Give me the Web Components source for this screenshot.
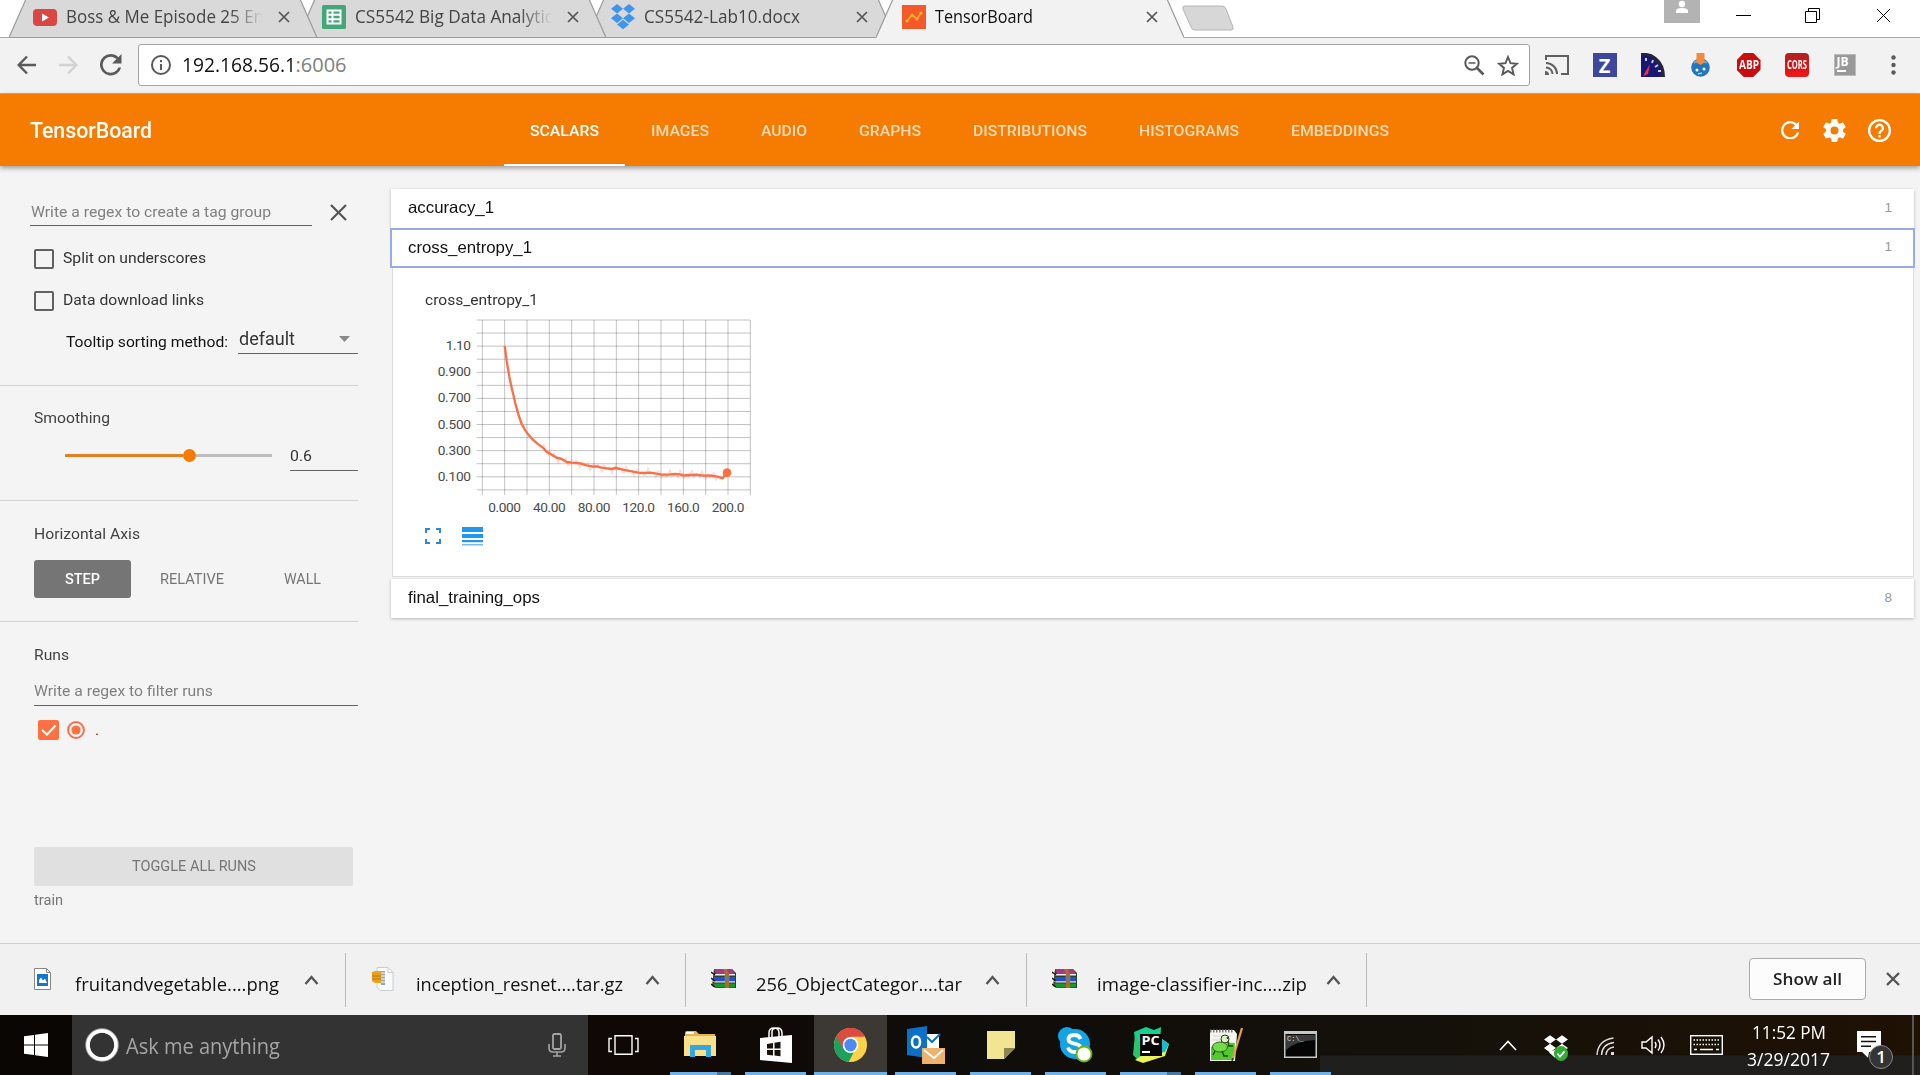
<!DOCTYPE html>
<html lang="en">
<head>
<meta charset="utf-8">
<title>TensorBoard</title>
<style>
html,body{margin:0;padding:0}
body{width:1920px;height:1075px;overflow:hidden;background:#f4f4f4;font-family:Roboto,"Liberation Sans",sans-serif}
</style>
</head>
<body>
<app-desktop></app-desktop>
<script>
const define = (name, css, html, ready) => customElements.define(name, class extends HTMLElement {
  connectedCallback() {
    if (this.shadowRoot) return;
    const root = this.attachShadow({ mode: 'open' });
    root.innerHTML = `<style>:host{display:block;box-sizing:border-box}*{box-sizing:border-box}svg{display:block;flex:none}${css}</style>${typeof html === 'function' ? html(this) : html}`;
    if (ready) ready(this, root);
  }
});
const svg = (w, h, body, vb, attrs = '') => `<svg width="${w}" height="${h}" viewBox="${vb || `0 0 ${w} ${h}`}" preserveAspectRatio="none" ${attrs}>${body}</svg>`;
const cross = (n, col, sw) => svg(n, n, `<path d="M1 1L${n - 1} ${n - 1}M${n - 1} 1L1 ${n - 1}" stroke="${col}" stroke-width="${sw}" fill="none"/>`);

/* One line of text stretched to the width given in w */
define('fit-text', `:host{flex:none;white-space:nowrap;line-height:1.2}span{display:inline-block;transform-origin:0 50%}`,
  '<span><slot></slot></span>', (el, root) => {
    const s = root.querySelector('span');
    if (el.getAttribute('s')) el.style.fontSize = el.getAttribute('s') + 'px';
    const w = +el.getAttribute('w');
    const natural = s.getBoundingClientRect().width;
    el.style.width = w + 'px';
    if (natural) s.style.transform = `scaleX(${w / natural})`;
  });

/* ---------- browser chrome ---------- */
define('browser-tab', `
:host{width:308px;height:38px;margin-right:-19px;flex:none;display:grid}
.shape,.row{grid-area:1/1}
.row{display:flex;align-items:center;height:34px;padding-left:24px}
.ico{width:24px;display:flex;justify-content:center;margin-right:9px;flex:none}
.label{width:206px;overflow:hidden;color:#444;flex:none;margin-top:-1px}
:host([fade]) .label{-webkit-mask-image:linear-gradient(90deg,#000 165px,transparent 197px);mask-image:linear-gradient(90deg,#000 165px,transparent 197px)}
:host([active]) .label{color:#111}
:host([active]) .row{padding-left:26px}
:host([active]) .x{margin-left:5px}
.x{margin-left:6px}`,
  el => {
    const on = el.hasAttribute('active');
    return `<div class="shape">${svg(308, 38, `<path d="M0 37.5L17 -1H291L308 37.5V38H0z" fill="${on ? '#f2f2f2' : '#d9d9d9'}"/><path d="M0 37.5L17 -1M291 -1L308 37.5${on ? '' : 'M0 37.5H308'}" stroke="#9b9b9b" stroke-width="1.2" fill="none"/>`)}</div>
<div class="row"><div class="ico"><slot name="icon"></slot></div><div class="label"><slot></slot></div><div class="x">${cross(12, '#555', 1.7)}</div></div>`;
  });

const dropbox = (w, h, c) => svg(w, h, `<path fill="${c}" d="M6 0L0 4l6 4 6-4zM18 0l-6 4 6 4 6-4zM0 12l6 4 6-4-6-4zM18 8l-6 4 6 4 6-4zM6 17.4l6 4 6-4-6-4z"/>`, '0 0 24 22');
define('tab-strip', `
:host{display:flex;height:38px;background:#fff;border-bottom:1px solid #a8a8a8;padding-left:9px;font:18px "Open Sans",sans-serif}
browser-tab:nth-of-type(1){z-index:3}browser-tab:nth-of-type(2){z-index:2}browser-tab:nth-of-type(3){z-index:1}browser-tab:nth-of-type(4){z-index:4}
.new{margin:5px 0 0 17px}
.win{margin-left:auto;display:flex;align-items:flex-start}
.av{width:36px;height:23px;background:#b3b3b3;display:flex;justify-content:center}
.min{width:15px;height:1px;background:#000;margin:15px 54px 0 36px}
.res{margin-top:8px}.cl{margin:8px 29px 0 56px}`,
  `<browser-tab fade>${svg(24, 17, '<rect width="24" height="17" rx="4" fill="#d94644"/><path d="M9 4.5v8l7-4z" fill="#fff"/>', '', 'slot="icon"')}<fit-text w="198">Boss &amp; Me Episode 25 En</fit-text></browser-tab>
<browser-tab fade>${svg(24, 24, '<rect width="24" height="24" rx="1.5" fill="#43a778"/><path d="M5.5 5.5h13v13h-13zM5.5 9.8h13M5.5 14.2h13M10.5 5.5v13" fill="none" stroke="#fff" stroke-width="2"/>', '', 'slot="icon"')}<fit-text w="198">CS5542 Big Data Analytic</fit-text></browser-tab>
<browser-tab><div slot="icon">${dropbox(24, 26, '#3f95ea')}</div><fit-text w="156">CS5542-Lab10.docx</fit-text></browser-tab>
<browser-tab active>${svg(24, 24, '<rect width="24" height="24" fill="#f4592a"/><path d="M5 16l5-6 5 4 4-6" fill="none" stroke="#ffb02a" stroke-width="1.8"/><g fill="#ffb02a"><circle cx="5" cy="16" r="1.6"/><circle cx="10" cy="10" r="1.5"/><circle cx="15" cy="14" r="1.5"/><circle cx="19" cy="8" r="1.6"/></g>', '', 'slot="icon"')}<fit-text w="98">TensorBoard</fit-text></browser-tab>
<div class="new">${svg(52, 26, '<path d="M3 1h37q3 0 4 3l7 18q1 3-2 3H13q-3 0-4-3L1 4q-1-3 2-3z" fill="#d7d7d7" stroke="#b4b4b4"/>')}</div>
<div class="win"><div class="av">${svg(14, 13, '<circle cx="7" cy="4" r="3.2" fill="#fff"/><path d="M1 13v-2q0-3 6-3t6 3v2z" fill="#fff"/>')}</div><div class="min"></div>
<div class="res">${svg(15, 15, '<path d="M.5 3.5h11v11H.5zM3.500 3.500V.5h11v11h-3" fill="none" stroke="#000"/>')}</div><div class="cl">${cross(15, '#000', 1)}</div></div>`);

const reload = (n, c) => svg(n, n, `<path fill="${c}" d="M17.65 6.35A7.96 7.96 0 0 0 12 4a8 8 0 1 0 7.73 10h-2.08A6 6 0 1 1 12 6c1.66 0 3.14.69 4.22 1.780L13 11h7V4z"/>`, '4 4 16 16');
define('nav-bar', `
:host{display:flex;align-items:center;height:56px;background:#f2f2f2;border-bottom:1px solid #b7b0a8;padding:0 0 1px 17px;font:20px "Open Sans",sans-serif}
.f{margin:0 22px 0 23px}
.omni{margin-left:16px;width:1392px;flex:none;height:42px;border:1px solid #a3a3a3;border-radius:3px;background:#fff;display:flex;align-items:center;padding-left:12px}
.u{margin-left:11px;color:#111}.p{color:#808080}.z{margin-left:auto}.s{margin:0 10px 0 12px}
.ext{display:flex;align-items:center;margin-left:15px;width:370px;flex:none}
.ext>*{width:24px;height:24px;margin-right:24px;display:flex;align-items:center;justify-content:center;flex:none}
.ext>:last-child{margin:0 0 0 1px}
.z1{background:#3d479c;color:#fff;font:bold 20px "Open Sans"}
.cors{background:linear-gradient(#b02224,#d11 60%,#ee1d1d);border-radius:4px;color:#fff}
.abp{background:#c70d0d;color:#fff;clip-path:polygon(30% 0,70% 0,100% 30%,100% 70%,70% 100%,30% 100%,0 70%,0 30%)}
.jb>div{width:22px;height:22px;background:#999;border:1px solid #bbb;color:#fff;font:bold 12px "Open Sans";line-height:14px;padding-left:2px}
.jb i{display:block;width:9px;height:2px;background:#fff;margin-top:1px}`,
  `${svg(19, 20, '<path d="M19 10H2M10 1.500L1.700 10l8.300 8.500" fill="none" stroke="#5a5a5a" stroke-width="2.400"/>')}
<div class="f">${svg(19, 20, '<path d="M0 10h17M9 1.500L17.300 10 9 18.500" fill="none" stroke="#d2d2d2" stroke-width="2.400"/>')}</div>
${reload(21.500, '#5a5a5a')}
<div class="omni">${svg(20, 20, '<circle cx="10" cy="10" r="9" fill="none" stroke="#5a5a5a" stroke-width="2"/><path d="M9 9h2v6H9zM9 5h2v2.300H9z" fill="#5a5a5a"/>')}
<fit-text class="u" w="114">192.168.56.1</fit-text><fit-text class="p" w="51">:6006</fit-text>
<div class="z">${svg(21, 21, '<circle cx="8" cy="8" r="6.700" fill="none" stroke="#5a5a5a" stroke-width="2"/><path d="M13 13l6.500 6.500" stroke="#5a5a5a" stroke-width="2.600"/><path d="M4.500 8h7" stroke="#5a5a5a" stroke-width="1.500"/>')}</div>
<div class="s">${svg(22, 21, '<path d="M11 2l2.500 6.200 6.500.5-5 4.200 1.600 6.500L11 15.900l-5.600 3.500L7 12.900 2 8.700l6.500-.5z" fill="none" stroke="#5a5a5a" stroke-width="1.900"/>')}</div></div>
<div class="ext"><div>${svg(24, 20, '<path d="M1 5V1h22v18h-7M1 8a11 11 0 0 1 11 11M1 12.500A6.500 6.500 0 0 1 7.500 19" fill="none" stroke="#606060" stroke-width="2"/><path d="M0 16a4 4 0 0 1 4 4H0z" fill="#606060"/>')}</div>
<div class="z1">Z</div>
<div>${svg(24, 24, '<path d="M0 0q9-1 15 4 9 7 9 20H0z" fill="#26233d"/><path d="M0 3q8-1 13 4 7 6 7 14l-3 3H0z" fill="#171774"/><path d="M5 5v3M12 7l-1 3M17 12l-3 2M20 18h-3" stroke="#c9cdf5" stroke-width="2"/><path d="M2 23L9 11 7 21z" fill="#f62c5b"/>')}</div>
<div>${svg(19, 24, '<circle cx="9.500" cy="14.500" r="9.300" fill="#2176bd"/><path d="M3 10q5-5 13 0" stroke="#58a9df" stroke-width="2" fill="none"/><path d="M5.500 0h8v8h2.500l-6.500 4-6.500-4h2.500z" fill="#f68a3a"/><circle cx="6" cy="17" r="1.500" fill="#fff"/><circle cx="13" cy="16" r="1.500" fill="#fff"/><path d="M7 21l4-1" stroke="#fff"/>')}</div>
<div class="abp"><fit-text w="20" s="11.500" style="font-weight:bold">ABP</fit-text></div>
<div class="cors"><fit-text w="20" s="12" style="font-weight:bold">CORS</fit-text></div>
<div class="jb"><div>JB<i></i></div></div>
<div>${svg(5, 20, '<g fill="#5a5a5a"><circle cx="2.500" cy="2.500" r="2.200"/><circle cx="2.500" cy="10" r="2.200"/><circle cx="2.500" cy="17.500" r="2.200"/></g>')}</div></div>`);

/* ---------- TensorBoard ---------- */
define('tb-header', `
:host{display:flex;height:72px;align-items:center;background:#f57c00;color:#fff;padding-left:30px;box-shadow:0 2px 5px rgba(0,0,0,.38);z-index:2;font-weight:500}
.tabs{display:flex;margin-left:352px}
.tabs div{height:72px;padding:2px 26px 0;display:flex;align-items:center;color:#fddcb9;font-weight:500}
.tabs .on{color:#fff;border-bottom:2px solid #fff;padding-top:4px;font-weight:500}
.r{margin-left:auto;display:flex;align-items:center;padding-right:29px}
.g{margin:0 22px 0 24px}`,
  `<fit-text w="122" s="21.500" style="margin-top:2px">TensorBoard</fit-text>
<div class="tabs"><div class="on"><fit-text w="69" s="15.500">SCALARS</fit-text></div>${[['IMAGES', 58], ['AUDIO', 46], ['GRAPHS', 62], ['DISTRIBUTIONS', 114], ['HISTOGRAMS', 100], ['EMBEDDINGS', 98]].map(t => `<div><fit-text w="${t[1]}" s="15.500">${t[0]}</fit-text></div>`).join('')}</div>
<div class="r">${reload(18.500, '#fff')}
<div class="g">${svg(23, 23, '<path fill="#fff" d="M19.430 12.980c.04-.32.07-.64.07-.98s-.03-.66-.07-.98l2.110-1.650c.19-.15.24-.42.12-.64l-2-3.460c-.12-.22-.39-.3-.61-.22l-2.490 1c-.52-.4-1.080-.73-1.690-.98l-.38-2.650C14.460 2.180 14.250 2 14 2h-4c-.25 0-.46.18-.49.42l-.38 2.650c-.61.25-1.170.59-1.690.98l-2.490-1c-.23-.09-.49 0-.61.22l-2 3.460c-.13.22-.07.49.12.64l2.110 1.650c-.04.32-.07.65-.07.98s.03.66.07.98l-2.110 1.650c-.19.15-.24.42-.12.64l2 3.460c.12.22.39.3.61.22l2.490-1c.52.4 1.080.73 1.690.98l.38 2.650c.03.24.24.42.49.42h4c.25 0 .46-.18.49-.42l.38-2.650c.61-.25 1.170-.59 1.690-.98l2.490 1c.23.09.49 0 .61-.22l2-3.460c.12-.22.07-.49-.12-.64zM12 15.500A3.500 3.500 0 1 1 12 8.500a3.500 3.500 0 0 1 0 7z"/>', '2 2 20 20')}</div>
${svg(23, 23, '<path fill="#fff" d="M11 18h2v-2h-2v2zm1-16a10 10 0 1 0 0 20 10 10 0 0 0 0-20zm0 18a8 8 0 1 1 0-16 8 8 0 0 1 0 16zm0-14a4 4 0 0 0-4 4h2a2 2 0 1 1 4 0c0 2-3 1.750-3 5h2c0-2.250 3-2.500 3-5a4 4 0 0 0-4-4z"/>', '2 2 20 20')}</div>`);

define('tb-checkbox', `:host{display:flex;align-items:center;height:21px}
.b{width:20px;height:20px;border:2px solid #616161;border-radius:2px;margin-right:9px}`,
  `<div class="b"></div><slot></slot>`);

define('tb-sidebar', `
:host{width:391px;flex:none;color:#333;display:flex;flex-direction:column}
section{width:358px;border-bottom:1px solid #d2d2d2;padding-left:34px;flex:none}
section:last-child{border:0}
.row{display:flex;align-items:center}
.ph{color:#808080;border-bottom:1px solid #616161}
.a{height:220px;padding-top:34px}
.b{height:115px;padding-top:23px}.c{height:121px;padding-top:24px}.d{padding-top:24px}
.btn{height:38px;display:flex;align-items:center;color:#757575;padding-top:1px}
.step{background:#757575;color:#fff;font-weight:500;border-radius:3px;width:97px;justify-content:center}
.track{width:207px;height:13px;display:flex;align-items:center}
.track i{height:3px;background:#e58022;width:118px}.track b{width:13px;height:13px;border-radius:50%;background:#f57c00}.track u{height:3px;flex:1;background:#bdbdbd}`,
  `<section class="a">
<div class="row" style="margin-left:-4px;height:26px"><div class="ph row" style="width:282px;height:26px;padding:0 0 1px 1px"><fit-text w="240" s="15.500">Write a regex to create a tag group</fit-text></div><div style="margin:-1px 0 0 18px">${cross(17, '#555', 2.200)}</div></div>
<tb-checkbox style="margin-top:22px"><fit-text w="143" s="15.500">Split on underscores</fit-text></tb-checkbox>
<tb-checkbox style="margin-top:21px"><fit-text w="141" s="15.500">Data download links</fit-text></tb-checkbox>
<div class="row" style="margin:14px 0 0 32px;height:30px"><fit-text w="162" s="15.500" style="color:#111;margin-top:5px">Tooltip sorting method:</fit-text><div class="row" style="margin:-2px 0 0 10px;width:120px;height:29px;border-bottom:1px solid #616161;padding:1px 8px 0 1px;justify-content:space-between"><fit-text w="56" s="18.500">default</fit-text>${svg(11, 6, '<path d="M0 0h11L5.500 6z" fill="#8a8a8a"/>')}</div></div>
</section>
<section class="b"><fit-text w="76" s="15.500" style="color:#424242">Smoothing</fit-text>
<div class="row" style="margin:13px 0 0 31px"><div class="track"><i></i><b></b><u></u></div><div class="row" style="margin:3px 0 0 18px;width:68px;height:27px;border-bottom:1px solid #616161;padding-bottom:1px"><fit-text w="22" s="15.500">0.6</fit-text></div></div></section>
<section class="c"><fit-text w="106" s="15.500" style="color:#424242">Horizontal Axis</fit-text>
<div class="row" style="margin-top:16px"><div class="btn step"><fit-text w="35" s="15.500">STEP</fit-text></div><div class="btn" style="margin-left:29px"><fit-text w="64" s="15.500">RELATIVE</fit-text></div><div class="btn" style="margin-left:60px"><fit-text w="37" s="15.500">WALL</fit-text></div></div></section>
<section class="d"><fit-text w="35" s="15.500" style="color:#424242">Runs</fit-text>
<div class="ph row" style="margin-top:14px;height:27px;padding-bottom:0"><fit-text w="179" s="15.500">Write a regex to filter runs</fit-text></div>
<div class="row" style="margin:14px 0 0 4px">${svg(21, 20, '<rect width="21" height="20" rx="2" fill="#ff7043"/><path d="M4 10l5 4.500L17.500 5.500" fill="none" stroke="#fff" stroke-width="2.200"/>')}
<div style="margin-left:8px">${svg(18, 18, '<circle cx="9" cy="9" r="7.900" fill="none" stroke="#f8704c" stroke-width="2"/><circle cx="9" cy="9" r="4.600" fill="#ff7043"/>')}</div><span style="margin-left:10px;font-size:15.500px;line-height:18px">.</span></div>
<div class="btn" style="width:319px;height:39px;background:#e0e0e0;border-radius:2px;margin-top:107px;justify-content:center;padding-top:0"><fit-text w="124" s="15.500">TOGGLE ALL RUNS</fit-text></div>
<fit-text w="29" s="15" style="color:#757575;margin-top:5px">train</fit-text></section>`);

const gx = i => 307 + i * 67, gy = i => 450 + i * 39.200;
define('scalar-chart', `text{font-family:Roboto,sans-serif;font-size:41px;fill:#4a4a4a}`, () => {
  let g = '';
  for (let i = 0; i < 13; i++) g += `<path d="M${gx(i)} 450V975"/>`;
  for (let i = 0; i < 14; i++) g += `<path d="M290 ${gy(i)}H1111"/>`;
  const yl = ['1.10', '0.900', '0.700', '0.500', '0.300', '0.100'].map((t, i) => `<text x="273" y="${gy(2 + 2 * i) + 12}" text-anchor="end" textLength="${i ? 100 : 76}" lengthAdjust="spacing">${t}</text>`).join('');
  const xl = ['0.000', '40.00', '80.00', '120.0', '160.0', '200.0'].map((t, i) => `<text x="${gx(1 + 2 * i)}" y="1025" text-anchor="middle" textLength="98" lengthAdjust="spacing">${t}</text>`).join('');
  const pts = '374,528 380,572 388,620 397,662 406,700 415,733 425,762 434,778 445,794 458,808 472,821 489,833 500,845 515,854 530,863 545,867 560,876 575,878 590,879 600,880 620,886 640,890 650,889 665,893 680,895 695,897 707,894 725,898 740,901 755,904 775,908 790,909 810,908 830,911 845,914 865,914 885,912 900,913 910,916 930,915 950,914 970,917 985,916 1000,918 1012,920 1028,925 1041,908';
  let noise = '';
  for (let x = 480, i = 0; x < 1030; x += 6, i++) {
    const f = pts.split(' ').map(p => p.split(',').map(Number));
    const k = f.findIndex(p => p[0] > x), a = f[k - 1], b = f[k];
    const y = a[1] + (b[1] - a[1]) * (x - a[0]) / (b[0] - a[0]);
    noise += `${x},${(y + Math.sin(i * 2.300) * 9 + Math.sin(i * 5.100) * 6).toFixed(1)} `;
  }
  return svg(340, 200, `<g stroke="#000" stroke-opacity=".24" stroke-width="3">${g}</g>${yl}${xl}<polyline points="${noise}" fill="none" stroke="#ff7043" stroke-opacity=".25" stroke-width="4"/><polyline points="${pts}" fill="none" stroke="#f9704a" stroke-width="7" stroke-linejoin="round"/><circle cx="1041" cy="908" r="13" fill="#ff7043"/>`, '135 441 1020 600');
});

define('tag-pane', `
:host{flex:none}
.h{height:39px;width:1523px;background:#fff;display:flex;align-items:center;justify-content:space-between;padding:0 22px 1px 17px;color:#111;font-family:"Liberation Sans",sans-serif;box-shadow:0 1px 3px rgba(0,0,0,.25)}
.n{color:#999;font-size:13.500px;margin-top:-2px}
:host([open]) .h{width:1525px;margin-left:-1px;height:40px;border:2px solid #95ade3;padding:0 21px 1px 16px;box-shadow:none}
.c{width:1522px;height:309px;margin:0 0 2px 1px;background:#fff;border:1px solid #ddd;border-top:0;padding:23px 0 0 32px}
:host(:not([open])) .c{display:none}`,
  el => `<div class="h"><slot name="name"></slot><span class="n">${el.getAttribute('count')}</span></div><div class="c"><slot></slot></div>`);

define('tb-main', `
:host{flex:1;padding-top:23px;display:flex;flex-direction:column}
.t{color:#333}.i{display:flex;align-items:center;margin-top:10px}`,
  `<tag-pane count="1"><fit-text slot="name" w="86" s="16.500">accuracy_1</fit-text></tag-pane>
<tag-pane open count="1"><fit-text slot="name" w="124" s="16.500">cross_entropy_1</fit-text>
<fit-text class="t" w="113" s="15.500">cross_entropy_1</fit-text>
<scalar-chart style="margin-top:7px"></scalar-chart>
<div class="i">${svg(16, 16, '<path d="M1 5V1h4M11 1h4v4M15 11v4h-4M5 15H1v-4" fill="none" stroke="#2b8bd3" stroke-width="2"/>')}<div style="margin-left:21px">${svg(21, 19, '<path d="M0 0h21v5H0zM0 7h21v4H0z" fill="#2196f3"/><path d="M0 13h21v2.200H0z" fill="#2196f3"/><path d="M0 17h21v1.500H0z" fill="#7fb9ea"/>')}</div></div>
</tag-pane>
<tag-pane count="8"><fit-text slot="name" w="132" s="16.500">final_training_ops</fit-text></tag-pane>`);

/* ---------- download shelf ---------- */
define('download-item', `
:host{display:flex;align-items:center;width:340.500px;height:54px;border-right:1px solid #bcbcbc;padding-left:25px;color:#111;flex:none}
.i{width:25px;height:24px;display:flex;align-items:center;justify-content:center;margin:-2px 20px 0 0;flex:none}
.t{width:229px;padding-top:8px}`,
  `<div class="i"><slot name="icon"></slot></div><div class="t"><slot></slot></div>${svg(15, 10, '<path d="M1.500 9L7.500 2l6 7" fill="none" stroke="#555" stroke-width="2.400"/>')}`);

const rar = svg(25, 20, '<path d="M3 0h18l4 4v15H5L1 17z" fill="#242"/><path d="M3 0h18l3 5H5z" fill="#a23a86"/><path d="M1 5h23v1.500H4z" fill="#eee"/><path d="M2 8h22v4H4z" fill="#2949d8"/><path d="M1 12.200h23v1.300H4z" fill="#eee"/><path d="M2 14.500h22v4H4z" fill="#159a27"/><path d="M12 0h4l2 5v14h-4V5z" fill="#b5672b"/><path d="M13.500 7h5v5h-5z" fill="#777"/><path d="M0 3l4 3M0 9l4 3M0 15l4 3" stroke="#311" stroke-width="1.500"/>', '', 'slot="icon"');
define('download-shelf', `
:host{display:flex;height:72px;background:#f1f1f1;border-top:1px solid #cfcfcf;padding:9px 0 0 5px;font:18.500px "Open Sans",sans-serif;flex:none}
.all{margin:5px 0 0 auto;width:117px;height:42px;border:1px solid #aaa;border-radius:4px;background:#fcfcfc;display:flex;align-items:center;justify-content:center;color:#222;font-weight:600}
.x{margin:19px 20px 0}`,
  `<download-item>${svg(17, 22, '<path d="M.5.5h12l4 4v17H.5z" fill="#fff" stroke="#888"/><path d="M12.500.5v4h4" fill="none" stroke="#888"/><path d="M3 6h11v12H3z" fill="#1277cf"/><path d="M5 15v-3l2-2.500 2 3 2-2 2 4.500z" fill="#fff"/>', '', 'slot="icon"')}<fit-text w="204">fruitandvegetable....png</fit-text></download-item>
<download-item>${svg(25, 24, '<path d="M6 .5h11l5 5v18H9L6 20z" fill="#fafafa" stroke="#c9cdd0"/><path d="M17 .5v5h5" fill="none" stroke="#c9cdd0"/><path d="M10 4h4v14h-4z" fill="#9aa4ab"/><path d="M10 6h4M10 9h4M10 12h4M10 15h4" stroke="#fff"/><path d="M1 5l3-1h6v12H4l-3-2z" fill="#e9a21f"/><path d="M1 9h9M1 12h9" stroke="#b9770c"/>', '', 'slot="icon"')}<fit-text w="207">inception_resnet....tar.gz</fit-text></download-item>
<download-item>${rar}<fit-text w="206">256_ObjectCategor....tar</fit-text></download-item>
<download-item>${rar}<fit-text w="210">image-classifier-inc....zip</fit-text></download-item>
<div class="all"><fit-text w="69" s="17">Show all</fit-text></div><div class="x">${cross(14, '#555', 2.400)}</div>`);

/* ---------- taskbar ---------- */
define('task-app', `
:host{width:61px;margin-right:14px;height:60px;display:flex;flex-direction:column;align-items:center;justify-content:center;flex:none;border-bottom:3px solid #6fb1e6;padding-top:2px}
:host([more]){border-image:linear-gradient(90deg,#6fb1e6 47px,#47779d 47px) 0 0 3 0}
:host([active]){width:73px;margin:0 8px 0 -6px;background:#3c3834}`, `<slot></slot>`);

define('task-bar', `
:host{display:flex;align-items:center;height:60px;color:#fff;font-family:"Open Sans",sans-serif;flex:none;background:linear-gradient(rgba(0,0,0,0) 40px,rgba(32,32,32,.9) 41px) 1320px 0/600px 60px no-repeat,linear-gradient(90deg,#0a0604,#100805 35%,#0f0d0a 50%,#15110a 75%,#1f1104)}
.search{width:516px;height:60px;background:#333;margin-left:24px;display:flex;align-items:center;padding:0 22px 0 13px;color:#a5a5a5;flex:none}
.apps{display:flex;align-items:center;margin-left:31px}
.tray{display:flex;align-items:center;margin-left:auto}
.tray>*{flex:none}
.note{display:flex;width:36px;height:42px;margin:14px 0 0 27px}
.clock{display:flex;flex-direction:column;align-items:center;gap:3px;margin:0 0 0 24px;width:83px}
.badge{width:24px;height:24px;border-radius:50%;background:#343434;border:1px solid #888;font-size:17px;font-weight:600;line-height:21px;text-align:center;margin:14px 0 0 -12px}
.end{width:2px;height:60px;background:#555;margin:0 6px 0 19px}`,
  `<div style="margin-left:24px">${svg(24, 24, '<path d="M0 3.300L10 2v9.400H0zM11 1.800L24 0v11.400H11zM0 12.500h10V22L0 20.700zM11 12.500h13V24l-13-1.800z" fill="#fff"/>')}</div>
<div class="search">${svg(34, 34, '<circle cx="17" cy="17" r="14.500" fill="none" stroke="#aaa" stroke-width="4.500"/><circle cx="17" cy="17" r="14" fill="none" stroke="#fff" stroke-width="3.500"/>')}<fit-text w="154" s="21" style="margin:4px 0 0 7px">Ask me anything</fit-text><div style="margin-left:auto">${svg(18, 24, '<rect x="5" y="1" width="8" height="15" rx="1.500" fill="none" stroke="#a5a5a5" stroke-width="1.800"/><path d="M1 11v4q0 4 4 4h8q4 0 4-4v-4M9 19v4M5 23h8" fill="none" stroke="#a5a5a5" stroke-width="1.600"/>')}</div></div>
<div style="margin-left:20px">${svg(31, 20, '<path d="M7 .7h17v18.600H7zM4 3.500H1v13h3M27 3.500h3v13h-3" fill="none" stroke="#fff" stroke-width="1.400"/>')}</div>
<div class="apps">
<task-app more>${svg(33, 27, '<path d="M1 2q0-2 2-2h9l3 3h16v6H1z" fill="#e3b550"/><path d="M0 5h32v20H0z" fill="#fbe08c"/><path d="M2 2h8" stroke="#fff" stroke-width="2"/><path d="M6 14h21v12h-5v-7H11v7H6z" fill="#35a7df"/>')}</task-app>
<task-app>${svg(32, 36, '<path d="M9 11V6q0-5 5-5t5 5v4M12 11V5q0-4 5-4t5 5v4" fill="none" stroke="#fff" stroke-width="1.500"/><path d="M0 11L32 8v28L0 33z" fill="#fff"/><path d="M7 17l6-1v5.500H7zM14.500 15.800l6-1v6.700h-6zM7 23h6v5.500l-6-.7zM14.500 23h6v6.300l-6-.7z" fill="#17120d"/>')}</task-app>
<task-app active>${svg(33, 34, '<circle cx="16" cy="16" r="16" fill="#fdd24b"/><path d="M16 16L2.200 8A16 16 0 0 1 29.900 8H16z" fill="#dd4b3e"/><path d="M16 16L2.200 8a16 16 0 0 0 12 24l6-11z" fill="#1da15f"/><path d="M16 8h14q-6-8-14-8T2.200 8L9 19z" fill="#dd4b3e"/><circle cx="16" cy="16" r="7.500" fill="#fff"/><circle cx="16" cy="16" r="6" fill="#4c8bf5"/>', '0 0 32 32')}</task-app>
<task-app>${svg(38, 38, '<path d="M0 3L20 0v32L0 29z" fill="#0b70c8"/><path d="M20 8h12v16H20z" fill="#fff"/><path d="M20 11l5 5 8-8" stroke="#0b70c8" stroke-width="2" fill="none"/><ellipse cx="9" cy="16" rx="4" ry="5.500" fill="none" stroke="#fff" stroke-width="2.600"/><path d="M15 22h23v16H15z" fill="#edb36d"/><path d="M17 24l10 8 9-8" stroke="#fff" stroke-width="1.800" fill="none"/>')}</task-app>
<task-app>${svg(28, 28, '<path d="M0 0h28v17L17 28H0z" fill="#f2e591"/><path d="M28 17L17 28V17z" fill="#8c8453"/>')}</task-app>
<task-app>${svg(35, 36, '<circle cx="9" cy="9" r="9" fill="#13a5e5"/><circle cx="17" cy="17" r="15" fill="#13a5e5"/><circle cx="24" cy="25" r="9" fill="#13a5e5"/><path d="M22.500 12q-1.500-4-6-4-6 0-6 4.500 0 3 6 4.200t6 4.300q0 4-6 4-5 0-6.500-4.500" fill="none" stroke="#fff" stroke-width="3.800"/><circle cx="26" cy="27" r="7.500" fill="#fff" stroke="#6ab40b" stroke-width="1.800"/>')}</task-app>
<task-app more>${svg(36, 36, '<path d="M1 5L13 0l8 3 7-3-1 18L5 33z" fill="#18cf8d"/><path d="M2 7l9 20-6 6L0 28z" fill="#27c56a"/><path d="M29 12l7 5-4 12L10 36l-8-3 12-8z" fill="#e9f256"/><path d="M29 12l7 5-4 8-5 1z" fill="#14bcd1"/><path d="M7 7h22v22H7z" fill="#060606"/><text x="8.500" y="18" font-size="12" font-weight="bold" fill="#fff" font-family="Open Sans" textLength="18" lengthAdjust="spacingAndGlyphs">PC</text><path d="M9 24h8v2H9z" fill="#fff"/>')}</task-app>
<task-app>${svg(34, 35, '<path d="M1 3h24l3 4-2 27H1z" fill="#f5f5f2"/><path d="M1 4h24" stroke="#777" stroke-width="3" stroke-dasharray="1.500 1.500"/><path d="M2 20q10-6 24-4l-1 17H2z" fill="#52c92f"/><path d="M4 9h18M3 13h18M3 17h18" stroke="#ccc" stroke-width=".8"/><circle cx="16" cy="12" r="4" fill="#d9f4c5" stroke="#253f1b"/><circle cx="18.500" cy="11" r="1" fill="#253f1b"/><ellipse cx="11" cy="20" rx="7.500" ry="5" fill="#74dc4a" stroke="#234617" stroke-width=".8"/><path d="M6 24l-2 4M13 24l2 5h4M19 14l1 5h4" stroke="#234617" stroke-width="1.400" fill="none"/><path d="M33 1L24 31" stroke="#e5a14c" stroke-width="2.200"/><path d="M24 31l-1 3" stroke="#333" stroke-width="1.500"/>')}</task-app>
<task-app>${svg(33, 27, '<path d="M0 0h33v27H0z" fill="#c5c8c9"/><path d="M1.500 3h30v22.500h-30z" fill="#050505"/><path d="M2 4h29v5Q11 10 2 19z" fill="#3a3a3a"/><text x="3" y="10" font-size="7" fill="#ddd" font-family="Liberation Mono">C:\\_</text>')}</task-app></div>
<div class="tray">${svg(18, 11, '<path d="M1 10l8-8.500L17 10" fill="none" stroke="#fff" stroke-width="1.600"/>')}
<div style="margin:4px 0 0 27px">${svg(24, 28, '<path d="M6 2L0 6l6 4 6-4zM18 2l-6 4 6 4 6-4zM0 14l6 4 6-4-6-4zM18 10l-6 4 6 4 6-4zM5 18l6 5 6-5-5-3z" fill="#fff"/><circle cx="17" cy="19" r="7" fill="#35ac35"/><path d="M13.500 19l2.500 3 4.500-5" fill="none" stroke="#fff" stroke-width="1.600"/>', '0 0 24 26')}</div>
<div style="margin:3px 0 0 28px">${svg(19, 19, '<g fill="none" stroke="#ddd" stroke-width="1.400"><path d="M1 18Q2 3 17.500 1"/><path d="M5.500 18Q6 7 18 5.500" /><path d="M10 18q.5-7 8-8"/></g><path d="M15 15h3v3h-3z" fill="#ddd"/>')}</div>
<div style="margin-left:26px">${svg(24, 20, '<g fill="none" stroke="#fff" stroke-width="1.400"><path d="M1 7h4l6-5v16l-6-5H1zM14 7q2 3 0 6M17 4.500q4 5.500 0 11M20 2q6 8 0 16"/></g>')}</div>
<div style="margin-left:25px">${svg(33, 20, '<rect x=".7" y=".7" width="31.600" height="18.600" fill="none" stroke="#fff" stroke-width="1.400"/><path d="M3.500 5h26M3.500 9.500h26" stroke="#fff" stroke-width="1.500" stroke-dasharray="1.500 1.500"/><path d="M4 14.500h3M10 14.500h13M26 14.500h3" stroke="#fff" stroke-width="1.500"/>')}</div>
<div class="clock"><fit-text w="74" s="17.500" style="line-height:24px">11:52 PM</fit-text><fit-text w="83" s="17.500" style="line-height:24px">3/29/2017</fit-text></div>
<div class="note">${svg(24, 28, '<path d="M0 0h24v18H12l-1 5-6-5H0z" fill="#fff"/><path d="M4 5h15M4 9h15M4 13h10" stroke="#16120c" stroke-width="1.300"/>', '0 0 24 24')}<div class="badge">1</div></div><div class="end"></div></div>`);

define('app-desktop', `
:host{display:flex;flex-direction:column;width:1920px;height:1075px}
.body{height:777px;display:flex;background:#f4f4f4;flex:none}`,
  `<tab-strip></tab-strip><nav-bar></nav-bar><tb-header></tb-header>
<div class="body"><tb-sidebar></tb-sidebar><tb-main></tb-main></div>
<download-shelf></download-shelf><task-bar></task-bar>`);
</script>
</body>
</html>
